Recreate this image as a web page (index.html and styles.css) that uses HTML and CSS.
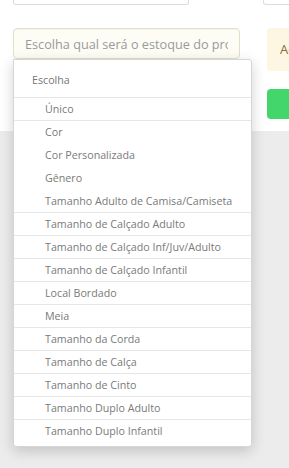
FILE: index.html
```html
<!DOCTYPE html>
<html lang="pt-BR">
<head>
    <meta charset="UTF-8">
    <meta name="viewport" content="width=device-width, initial-scale=1.0">
    <title>Estoque do produto</title>
    <link rel="stylesheet" href="styles.css">
</head>
<body>
    <div class="panel">
        <div class="col-left">
            <div class="stub stub-left"></div>
            <div class="select-wrap">
                <input type="text" class="search" placeholder="Escolha qual será o estoque do produto">
                <ul class="dropdown">
                    <li class="group">Escolha</li>
                    <li>Único</li>
                    <li>Cor</li>
                    <li class="plain">Cor Personalizada</li>
                    <li class="plain">Gênero</li>
                    <li class="plain">Tamanho Adulto de Camisa/Camiseta</li>
                    <li>Tamanho de Calçado Adulto</li>
                    <li>Tamanho de Calçado Inf/Juv/Adulto</li>
                    <li>Tamanho de Calçado Infantil</li>
                    <li>Local Bordado</li>
                    <li>Meia</li>
                    <li>Tamanho da Corda</li>
                    <li>Tamanho de Calça</li>
                    <li>Tamanho de Cinto</li>
                    <li>Tamanho Duplo Adulto</li>
                    <li>Tamanho Duplo Infantil</li>
                </ul>
            </div>
        </div>
        <div class="col-right">
            <div class="stub stub-right"></div>
            <div class="alert">Adicione as variações</div>
            <button class="btn-add">Adicionar</button>
        </div>
    </div>
    <div class="backdrop"></div>
</body>
</html>
```

FILE: styles.css
```css
html {
    overflow: hidden;
}

body {
    margin: 0;
    min-height: 468px;
    background-color: #ececec;
    font-family: "Open Sans", Arial, sans-serif;
}

.panel {
    background: white;
    height: 131px;
    display: flex;
    padding-left: 13px;
    box-sizing: border-box;
    width: 289px;
    overflow: visible;
}

.col-left {
    width: 227px;
    flex: none;
}

.col-right {
    margin-left: 23px;
    width: 26px;
    flex: none;
    overflow: hidden;
}

.backdrop {
    height: 337px;
}

.stub {
    height: 4px;
    border: 1px solid #dcdcdc;
    border-top: none;
    border-radius: 0 0 3px 3px;
}

.stub-left {
    width: 174px;
}

.stub-right {
    width: 200px;
}

.select-wrap {
    position: relative;
    margin-top: 23px;
}

.search {
    display: block;
    width: 227px;
    height: 31px;
    padding: 0 11px 0 11px;
    border: 1px solid #e2e0c6;
    border-radius: 4px;
    background: #fdfdf6;
    font-family: "Open Sans", Arial, sans-serif;
    font-size: 12.7px;
    color: #555;
    box-sizing: border-box;
    box-shadow: inset 0 1px 1px rgba(0,0,0,0.04);
    outline: none;
}

.search::placeholder {
    color: #9a9a9a;
}

.dropdown {
    position: absolute;
    top: 31px;
    left: 0;
    width: 239px;
    margin: 0;
    padding: 0 0 4px;
    list-style: none;
    background: white;
    border: 1px solid #d6d6d6;
    border-radius: 0 3px 3px 3px;
    box-shadow: 0 4px 14px rgba(0,0,0,0.18);
    box-sizing: border-box;
    z-index: 5;
}

.dropdown li {
    height: 23px;
    line-height: 22px;
    padding-left: 31px;
    border-top: 1px solid #e6e6e6;
    font-size: 10.7px;
    color: #7a7a7a;
    white-space: nowrap;
    box-sizing: border-box;
}

.dropdown li.plain {
    border-top-color: transparent;
}

.dropdown li.group {
    height: 37px;
    line-height: 41px;
    padding-left: 18px;
    border-top: none;
    color: #7c7474;
}

.alert {
    margin: 23px 0 0 4px;
    width: 200px;
    height: 43px;
    line-height: 43px;
    padding-left: 13px;
    background: #fcf6e2;
    border-radius: 4px;
    color: #8a6d3b;
    font-size: 13px;
    white-space: nowrap;
}

.btn-add {
    display: block;
    margin: 18px 0 0 4px;
    width: 200px;
    height: 30px;
    border: none;
    border-radius: 4px;
    background-color: #43d66b;
    color: white;
    font-family: "Open Sans", Arial, sans-serif;
    font-size: 13px;
}
```
